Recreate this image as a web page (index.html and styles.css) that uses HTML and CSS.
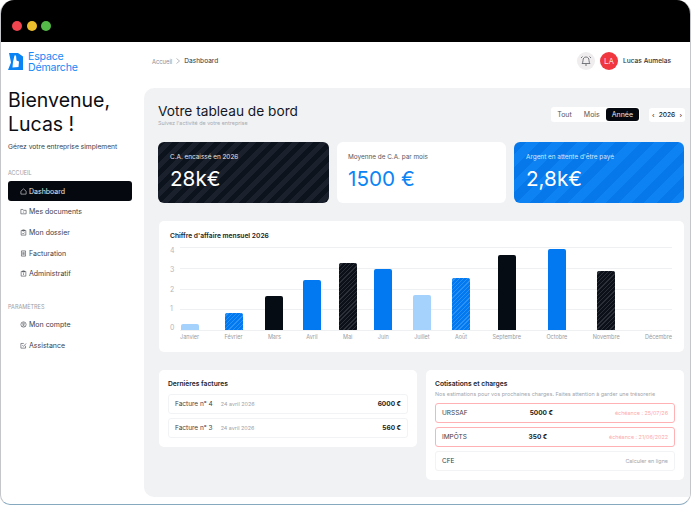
FILE: index.html
```html
<!DOCTYPE html>
<html lang="fr">

<head>
    <meta charset="UTF-8">
    <meta name="viewport" content="width=device-width, initial-scale=1.0">
    <title>Espace Démarche - Dashboard</title>
    <link rel="stylesheet" href="styles.css">
</head>

<body>
    <div class="window">
        <div class="titlebar">
            <span class="dot dot-red"></span>
            <span class="dot dot-yellow"></span>
            <span class="dot dot-green"></span>
        </div>

        <div class="app">
            <aside class="sidebar">
                <div class="logo">
                    <svg class="logo-icon" viewBox="0 0 15 18">
                        <path fill="#0a84f5" d="M1 0h9l5 3.500V17H0l3-7.500z" />
                        <path fill="#fff" d="M6.500 2.500L8 2.500 8.500 7.500 11 8.500 10.500 14 4.500 14.500 5 9z" />
                    </svg>
                    <div class="logo-text">Espace<br>Démarche</div>
                </div>

                <h1 class="welcome">Bienvenue,<br>Lucas !</h1>
                <p class="tagline">Gérez votre entreprise simplement</p>

                <div class="nav-title">ACCUEIL</div>
                <nav class="nav">
                    <a class="nav-item active">
                        <svg class="nav-icon" viewBox="0 0 12 12"><path d="M1.500 5.500L6 1.500l4.500 4v5h-9z" /></svg>
                        Dashboard
                    </a>
                    <a class="nav-item">
                        <svg class="nav-icon" viewBox="0 0 12 12"><path d="M1.500 2.500h3.500l1 1.500h4.500v6h-9zM5 7h2" /></svg>
                        Mes documents
                    </a>
                    <a class="nav-item">
                        <svg class="nav-icon" viewBox="0 0 12 12"><path d="M2 2.500h8v8H2zM4.500 1.500h3v2h-3zM4 7l1.500 1.500L8 6" /></svg>
                        Mon dossier
                    </a>
                    <a class="nav-item">
                        <svg class="nav-icon" viewBox="0 0 12 12"><path d="M2.500 1.500h7v9h-7zM4 4h4M4 6h4M4 8h4" /></svg>
                        Facturation
                    </a>
                    <a class="nav-item">
                        <svg class="nav-icon" viewBox="0 0 12 12"><path d="M2 2.500h8v8H2zM4.500 1.500h3v2h-3zM6 5.500v3" /></svg>
                        Administratif
                    </a>
                </nav>

                <div class="nav-title nav-title-2">PARAMÈTRES</div>
                <nav class="nav">
                    <a class="nav-item">
                        <svg class="nav-icon" viewBox="0 0 12 12"><circle cx="6" cy="6" r="4.500" /><circle cx="6" cy="5" r="1.500" /><path d="M3.500 9.500c1-2 4-2 5 0" /></svg>
                        Mon compte
                    </a>
                    <a class="nav-item">
                        <svg class="nav-icon" viewBox="0 0 12 12"><path d="M9.500 6.500v4h-8v-8h5M4 5.500l2 2 4.500-5" /></svg>
                        Assistance
                    </a>
                </nav>
            </aside>

            <div class="content">
                <header class="topbar">
                    <div class="breadcrumb">
                        <span class="crumb">Accueil</span>
                        <svg class="crumb-sep" viewBox="0 0 4 6"><path d="M.5.500L3.500 3 .5 5.500" /></svg>
                        <span class="crumb-current">Dashboard</span>
                    </div>
                    <div class="user">
                        <span class="bell">
                            <svg viewBox="0 0 12 12"><path d="M6 2c-2 0-3 1.500-3 3.500 0 1.500-.5 2.500-1 3h8c-.5-.5-1-1.500-1-3C9 3.500 8 2 6 2zM5 10h2M1 3l1.500-1.500M11 3L9.500 1.500" /></svg>
                        </span>
                        <span class="avatar">LA</span>
                        <span class="user-name">Lucas Aumelas</span>
                    </div>
                </header>

                <main class="panel">
                    <div class="panel-head">
                        <div>
                            <h2 class="panel-title">Votre tableau de bord</h2>
                            <p class="panel-sub">Suivez l'activité de votre entreprise</p>
                        </div>
                        <div class="filters">
                            <div class="tabs">
                                <span class="tab">Tout</span>
                                <span class="tab">Mois</span>
                                <span class="tab tab-active">Année</span>
                            </div>
                            <div class="year"><span>‹</span><b>2026</b><span>›</span></div>
                        </div>
                    </div>

                    <section class="stats">
                        <div class="stat stat-dark">
                            <div class="stat-label">C.A. encaissé en 2026</div>
                            <div class="stat-value">28k€</div>
                        </div>
                        <div class="stat stat-light">
                            <div class="stat-label">Moyenne de C.A. par mois</div>
                            <div class="stat-value">1500 €</div>
                        </div>
                        <div class="stat stat-blue">
                            <div class="stat-label">Argent en attente d'être payé</div>
                            <div class="stat-value">2,8k€</div>
                        </div>
                    </section>

                    <section class="card chart-card">
                        <h3 class="card-title">Chiffre d'affaire mensuel 2026</h3>
                        <div class="chart">
                            <div class="axis">
                                <span>4</span><span>3</span><span>2</span><span>1</span><span>0</span>
                            </div>
                            <div class="plot">
                                <div class="month"><div class="bar bar-pale h-6"></div><span>Janvier</span></div>
                                <div class="month"><div class="bar bar-blue-hatch h-17"></div><span>Février</span></div>
                                <div class="month"><div class="bar bar-dark h-34"></div><span>Mars</span></div>
                                <div class="month"><div class="bar bar-blue h-50"></div><span>Avril</span></div>
                                <div class="month"><div class="bar bar-dark-hatch h-67"></div><span>Mai</span></div>
                                <div class="month"><div class="bar bar-blue h-61"></div><span>Juin</span></div>
                                <div class="month"><div class="bar bar-pale h-35"></div><span>Juillet</span></div>
                                <div class="month"><div class="bar bar-blue-hatch h-52"></div><span>Août</span></div>
                                <div class="month"><div class="bar bar-dark h-75"></div><span>Septembre</span></div>
                                <div class="month"><div class="bar bar-blue h-81"></div><span>Octobre</span></div>
                                <div class="month"><div class="bar bar-dark-hatch h-59"></div><span>Novembre</span></div>
                                <div class="month"><span>Décembre</span></div>
                            </div>
                        </div>
                    </section>

                    <section class="bottom">
                        <div class="card invoices">
                            <h3 class="card-title">Dernières factures</h3>
                            <div class="row">
                                <span class="row-name">Facture n° 4</span>
                                <span class="row-date">24 avril 2026</span>
                                <b class="row-amount">6000 €</b>
                            </div>
                            <div class="row">
                                <span class="row-name">Facture n° 3</span>
                                <span class="row-date">24 avril 2026</span>
                                <b class="row-amount">560 €</b>
                            </div>
                        </div>

                        <div class="card charges">
                            <h3 class="card-title">Cotisations et charges</h3>
                            <p class="card-sub">Nos estimations pour vos prochaines charges. Faites attention à garder une trésorerie</p>
                            <div class="row row-alert">
                                <span>URSSAF</span>
                                <b class="charge-amount">5000 €</b>
                                <span class="charge-note">échéance : 25/07/26</span>
                            </div>
                            <div class="row row-alert">
                                <span>IMPÔTS</span>
                                <b class="charge-amount">350 €</b>
                                <span class="charge-note">échéance : 21/06/2022</span>
                            </div>
                            <div class="row">
                                <span>CFE</span>
                                <span class="charge-note charge-link">Calculer en ligne</span>
                            </div>
                        </div>
                    </section>
                </main>
            </div>
        </div>
    </div>
</body>

</html>
```

FILE: styles.css
```css
* {
    box-sizing: border-box;
}

body {
    margin: 0;
    background-color: #ffffff;
    font-family: Inter, "Liberation Sans", sans-serif;
    color: #14171f;
}

h1,
h2,
h3,
p {
    margin: 0;
    font-weight: 400;
}

.window {
    width: 691px;
    height: 505px;
    display: flex;
    flex-direction: column;
    overflow: hidden;
    border-radius: 14px 14px 12px 10px;
    border: 1px solid #c4c6ca;
    border-top: 0;
    border-bottom-color: #86a9bf;
}

/* Barre du haut */
.titlebar {
    height: 42px;
    flex: none;
    padding: 10px 0 0 11px;
    background-color: #000000;
    display: flex;
    align-items: center;
    gap: 4.500px;
}

.dot {
    width: 10px;
    height: 10px;
    border-radius: 50%;
}

.dot-red {
    background-color: #f0444f;
}

.dot-yellow {
    background-color: #ecbd2c;
}

.dot-green {
    background-color: #54b948;
}

.app {
    flex: 1;
    display: flex;
    min-height: 0;
}

/* Sidebar */
.sidebar {
    width: 143px;
    flex: none;
    padding: 10px 12px 0 7px;
}

.logo {
    display: flex;
    align-items: center;
    gap: 5px;
    height: 19px;
}

.logo-icon {
    width: 15px;
    height: 18px;
}

.logo-text {
    font-size: 10.600px;
    line-height: 11px;
    color: #1787f5;
    letter-spacing: -0.2px;
}

.welcome {
    margin-top: 17px;
    font-size: 19.500px;
    line-height: 24px;
    color: #0c0e13;
}

.tagline {
    margin-top: 7px;
    font-size: 6.700px;
    line-height: 8px;
    color: #3a3d45;
}

.nav-title {
    margin-top: 19px;
    font-size: 5.500px;
    line-height: 7px;
    color: #9b9ea5;
}

.nav-title-2 {
    margin-top: 20px;
}

.nav {
    margin-top: 4px;
    display: flex;
    flex-direction: column;
    gap: 0.700px;
}

.nav-item {
    height: 20px;
    padding-left: 12px;
    display: flex;
    align-items: center;
    gap: 2px;
    font-size: 7px;
    color: #3d4048;
    border-radius: 3px;
}

.active {
    background-color: #05090f;
    color: #e8e9eb;
}

.nav-icon {
    width: 7px;
    height: 7px;
    fill: none;
    stroke: currentColor;
    stroke-width: 1;
}

/* Contenu */
.content {
    flex: 1;
    display: flex;
    flex-direction: column;
    min-width: 0;
}

.topbar {
    height: 46px;
    flex: none;
    padding: 0 19px 8px 8px;
    display: flex;
    align-items: center;
    justify-content: space-between;
}

.breadcrumb {
    display: flex;
    align-items: center;
    gap: 4px;
    font-size: 5.800px;
    color: #8b8e95;
}

.crumb-sep {
    width: 4px;
    height: 6px;
    fill: none;
    stroke: #8b8e95;
    stroke-width: 0.600;
}

.crumb-current {
    font-size: 6.600px;
    color: #33363d;
}

.user {
    display: flex;
    align-items: center;
    gap: 5px;
}

.bell {
    width: 18px;
    height: 18px;
    border-radius: 50%;
    background-color: #efedee;
    display: flex;
    align-items: center;
    justify-content: center;
}

.bell svg {
    width: 12px;
    height: 12px;
    fill: none;
    stroke: #55585e;
    stroke-width: 0.800;
}

.avatar {
    width: 18px;
    height: 18px;
    border-radius: 50%;
    background-color: #f0363f;
    color: #ffd9da;
    font-size: 8px;
    display: flex;
    align-items: center;
    justify-content: center;
}

.user-name {
    font-size: 6.600px;
    font-weight: 500;
    color: #2c2f36;
}

.panel {
    flex: 1;
    background-color: #f1f2f4;
    border-radius: 10px 0 0 10px;
    padding: 14px 5px 0 14px;
    margin-bottom: 7px;
    min-height: 0;
}

.panel-head {
    display: flex;
    justify-content: space-between;
    align-items: flex-start;
    height: 40px;
}

.panel-title {
    font-size: 13.700px;
    line-height: 18px;
    color: #14171f;
}

.panel-sub {
    font-size: 5.400px;
    color: #a8abb1;
}

.filters {
    display: flex;
    align-items: center;
    gap: 9px;
    margin-top: 5px;
}

.tabs {
    display: flex;
    align-items: center;
    background-color: #ffffff;
    border-radius: 3px;
    height: 15px;
    padding: 0 1px 0 0;
}

.tab {
    font-size: 7px;
    color: #53565c;
    padding: 0 6px;
    height: 13px;
    line-height: 13px;
}

.tab-active {
    background-color: #05090f;
    color: #e6e7e9;
    border-radius: 3px;
}

.year {
    height: 14px;
    width: 36px;
    background-color: #ffffff;
    border-radius: 3px;
    padding: 0 3px;
    display: flex;
    align-items: center;
    justify-content: space-between;
    font-size: 6.600px;
}

.year b {
    font-weight: 500;
}

.stats {
    display: flex;
    gap: 8px;
}

.stat {
    height: 61px;
    border-radius: 6px;
    padding: 11px 12px;
}

.stat-dark {
    width: 171px;
    color: #e6e7e9;
    background: repeating-linear-gradient(135deg, #0c131d 0 5px, #1a212c 5px 10px);
}

.stat-light {
    width: 169px;
    padding-left: 11px;
    background-color: #ffffff;
    color: #55585e;
}

.stat-blue {
    width: 170px;
    color: #d5e8fd;
    background: repeating-linear-gradient(135deg, #0678ea 0 9px, #0c82f3 9px 18px);
}

.stat-label {
    font-size: 6.400px;
    line-height: 8px;
}

.stat-value {
    margin-top: 5px;
    font-size: 20.700px;
    line-height: 26px;
    color: #ffffff;
}

.stat-light .stat-value {
    color: #0a84f5;
}

.card {
    background-color: #ffffff;
    border-radius: 5px;
}

.card-title {
    font-size: 6.700px;
    font-weight: 600;
    line-height: 9px;
    color: #20232a;
}

/* Graphique */
.chart-card {
    width: 525px;
    height: 131px;
    margin: 18px 0 0 1px;
    padding: 11px 12px 0 11px;
}

.chart {
    display: flex;
    margin-top: 6px;
    height: 98px;
}

.axis {
    width: 10px;
    height: 85px;
    display: flex;
    flex-direction: column;
    justify-content: space-between;
    font-size: 7px;
    line-height: 8px;
    color: #b5b7bc;
}

.plot {
    flex: 1;
    height: 98px;
    display: flex;
    justify-content: space-between;
    align-items: flex-end;
    background-image: repeating-linear-gradient(to bottom, #eff0f2 0 1px, transparent 1px 20.750px);
    background-size: 100% 84px;
    background-repeat: no-repeat;
}

.month {
    display: flex;
    flex-direction: column;
    align-items: center;
}

.month span {
    height: 15px;
    line-height: 14px;
    font-size: 5.500px;
    color: #9a9da3;
    white-space: nowrap;
}

/* la barre deborde de sa colonne, seul le libelle donne la largeur */
.bar {
    width: 18px;
    margin: 0 -9px;
    border-radius: 2px 2px 0 0;
}

.bar-pale {
    background-color: #a5d2fc;
}

.bar-blue {
    background-color: #0279f1;
}

.bar-dark {
    background-color: #060c14;
}

.bar-blue-hatch {
    background: repeating-linear-gradient(135deg, #0279f1 0 2px, #2a91f5 2px 3px);
}

.bar-dark-hatch {
    background: repeating-linear-gradient(135deg, #0b1019 0 2px, #2a2f38 2px 3px);
}

.h-6 { height: 6px; }
.h-17 { height: 17px; }
.h-34 { height: 34px; }
.h-35 { height: 35px; }
.h-50 { height: 50px; }
.h-52 { height: 52px; }
.h-59 { height: 59px; }
.h-61 { height: 61px; }
.h-67 { height: 67px; }
.h-75 { height: 75px; }
.h-81 { height: 81px; }

/* Listes du bas */
.bottom {
    display: flex;
    align-items: flex-start;
    gap: 9px;
    margin: 18px 0 0 1px;
}

.invoices {
    width: 258px;
    height: 77px;
    padding: 10px 9px 9px;
}

.charges {
    width: 258px;
    height: 110px;
    padding: 10px 9px 9px;
}

.card-sub {
    font-size: 5.450px;
    line-height: 8px;
    margin: 1px 0 5px;
    color: #a3a6ac;
    white-space: nowrap;
}

.row {
    height: 20px;
    margin-top: 4px;
    padding: 0 6px;
    display: flex;
    align-items: center;
    border: 1px solid #f2f3f5;
    border-radius: 3px;
    font-size: 6.500px;
    color: #3d4048;
}

.charges .row {
    justify-content: space-between;
}

.invoices .card-title {
    margin-bottom: 5px;
}

.row-date {
    margin-left: 8px;
    font-size: 5.400px;
    color: #a0a3a9;
}

.row-amount {
    margin-left: auto;
    font-weight: 700;
    color: #181b21;
}

.row-alert {
    border-color: #ffb1b4;
}

.charge-amount {
    font-weight: 700;
    color: #181b21;
}

.charge-note {
    font-size: 5.400px;
    color: #fda9ac;
}

.charge-link {
    color: #a3a6ac;
}
```
